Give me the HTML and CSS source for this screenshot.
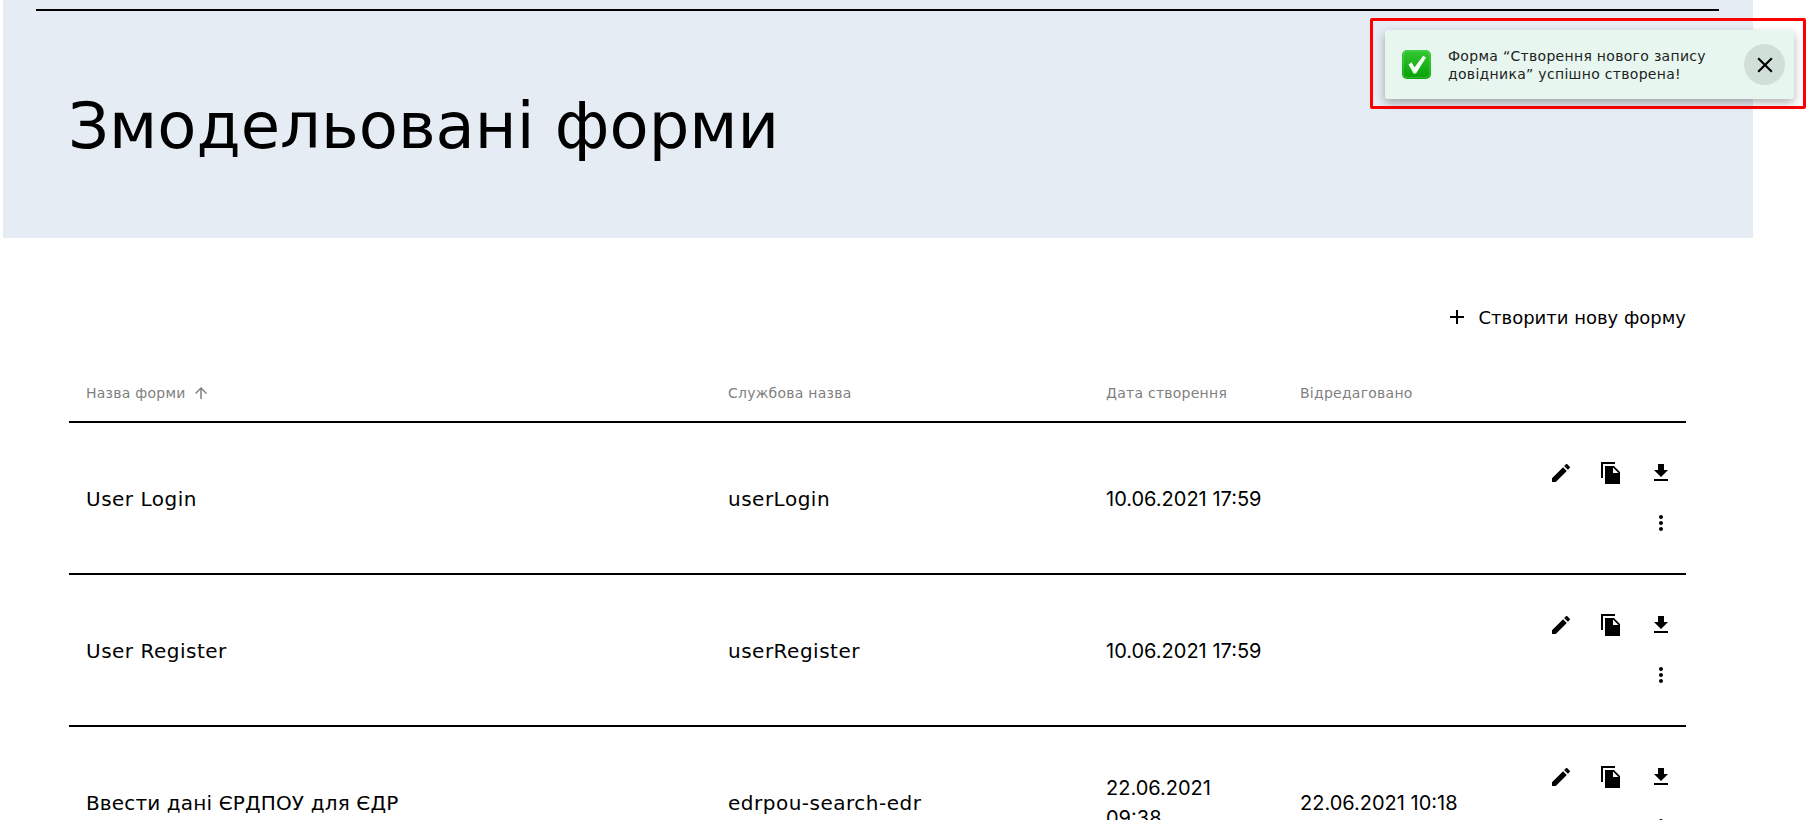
FILE: index.html
```html
<!DOCTYPE html>
<html lang="uk">
<head>
<meta charset="utf-8">
<title>Змодельовані форми</title>
<link rel="stylesheet" href="styles.css">
</head>
<body>
<div class="page">
  <header class="hero">
    <div class="hero-rule"></div>
    <h1 class="hero-title">Змодельовані форми</h1>
  </header>
  <main class="content">
    <div class="toolbar">
      <a class="create-link">
        <svg class="create-icon" viewBox="0 0 24 24"><path d="M19 13h-6v6h-2v-6H5v-2h6V5h2v6h6v2z"/></svg>
        <span>Створити нову форму</span>
      </a>
    </div>
    <table class="forms">
      <thead>
        <tr>
          <th class="col-name">Назва форми <svg class="sort-icon" viewBox="0 0 24 24"><path d="M4 12l1.41 1.41L11 7.83V20h2V7.83l5.58 5.59L20 12l-8-8-8 8z"/></svg></th>
          <th class="col-code">Службова назва</th>
          <th class="col-date">Дата створення</th>
          <th class="col-edit">Відредаговано</th>
          <th class="col-actions"></th>
        </tr>
      </thead>
      <tbody>
        <tr>
          <td>User Login</td><td>userLogin</td><td class="date">10.06.2021 17:59</td><td class="date"></td>
          <td class="actions"><div class="action-grid">
            <svg class="ico" viewBox="0 0 24 24"><path d="M3 17.25V21h3.75L17.81 9.94l-3.75-3.75L3 17.25zM20.71 7.04c.39-.39.39-1.02 0-1.41l-2.34-2.34c-.39-.39-1.02-.39-1.41 0l-1.83 1.83 3.75 3.75 1.83-1.83z"/></svg>
            <svg class="ico" viewBox="0 0 24 24"><path d="M16 1H2v16h2V3h12V1zm-1 4l6 6v12H6V5h9zm-1 7h5.5L14 6.5V12z"/></svg>
            <svg class="ico" viewBox="0 0 24 24"><path d="M19 9h-4V3H9v6H5l7 7 7-7zM5 18v2h14v-2H5z"/></svg>
            <svg class="ico" viewBox="0 0 24 24"><path d="M12 8c1.1 0 2-.9 2-2s-.9-2-2-2-2 .9-2 2 .9 2 2 2zm0 2c-1.1 0-2 .9-2 2s.9 2 2 2 2-.9 2-2-.9-2-2-2zm0 6c-1.1 0-2 .9-2 2s.9 2 2 2 2-.9 2-2-.9-2-2-2z"/></svg>
          </div></td>
        </tr>
        <tr>
          <td>User Register</td><td>userRegister</td><td class="date">10.06.2021 17:59</td><td class="date"></td>
          <td class="actions"><div class="action-grid">
            <svg class="ico" viewBox="0 0 24 24"><path d="M3 17.25V21h3.75L17.81 9.94l-3.75-3.75L3 17.25zM20.71 7.04c.39-.39.39-1.02 0-1.41l-2.34-2.34c-.39-.39-1.02-.39-1.41 0l-1.83 1.83 3.75 3.75 1.83-1.83z"/></svg>
            <svg class="ico" viewBox="0 0 24 24"><path d="M16 1H2v16h2V3h12V1zm-1 4l6 6v12H6V5h9zm-1 7h5.5L14 6.5V12z"/></svg>
            <svg class="ico" viewBox="0 0 24 24"><path d="M19 9h-4V3H9v6H5l7 7 7-7zM5 18v2h14v-2H5z"/></svg>
            <svg class="ico" viewBox="0 0 24 24"><path d="M12 8c1.1 0 2-.9 2-2s-.9-2-2-2-2 .9-2 2 .9 2 2 2zm0 2c-1.1 0-2 .9-2 2s.9 2 2 2 2-.9 2-2-.9-2-2-2zm0 6c-1.1 0-2 .9-2 2s.9 2 2 2 2-.9 2-2-.9-2-2-2z"/></svg>
          </div></td>
        </tr>
        <tr>
          <td class="name-cyr">Ввести дані ЄРДПОУ для ЄДР</td><td>edrpou-search-edr</td><td class="date">22.06.2021 09:38</td><td class="date">22.06.2021 10:18</td>
          <td class="actions"><div class="action-grid">
            <svg class="ico" viewBox="0 0 24 24"><path d="M3 17.25V21h3.75L17.81 9.94l-3.75-3.75L3 17.25zM20.71 7.04c.39-.39.39-1.02 0-1.41l-2.34-2.34c-.39-.39-1.02-.39-1.41 0l-1.83 1.83 3.75 3.75 1.83-1.83z"/></svg>
            <svg class="ico" viewBox="0 0 24 24"><path d="M16 1H2v16h2V3h12V1zm-1 4l6 6v12H6V5h9zm-1 7h5.5L14 6.5V12z"/></svg>
            <svg class="ico" viewBox="0 0 24 24"><path d="M19 9h-4V3H9v6H5l7 7 7-7zM5 18v2h14v-2H5z"/></svg>
            <svg class="ico" viewBox="0 0 24 24"><path d="M12 8c1.1 0 2-.9 2-2s-.9-2-2-2-2 .9-2 2 .9 2 2 2zm0 2c-1.1 0-2 .9-2 2s.9 2 2 2 2-.9 2-2-.9-2-2-2zm0 6c-1.1 0-2 .9-2 2s.9 2 2 2 2-.9 2-2-.9-2-2-2z"/></svg>
          </div></td>
        </tr>
      </tbody>
    </table>
  </main>
</div>
<div class="highlight">
  <div class="toast">
    <svg class="toast-check" viewBox="0 0 29 29">
      <defs>
        <linearGradient id="checkFill" x1="0" y1="0" x2="0" y2="1">
          <stop offset="0" stop-color="#35c935"/>
          <stop offset="1" stop-color="#059f05"/>
        </linearGradient>
      </defs>
      <rect width="29" height="29" rx="5" fill="url(#checkFill)"/>
      <rect x="1.2" y="1" width="26.6" height="26.6" rx="4" fill="none" stroke="#6fdf6f" stroke-opacity=".45"/>
      <path d="M6.5 14.5L9.6 12.2 12.6 17.3 21.2 5.8 24 7.6 14 23.6H11.6z" fill="#f4fff4"/>
    </svg>
    <p class="toast-text">Форма “Створення нового запису довідника” успішно створена!</p>
    <span class="toast-close"><svg class="close-ico" viewBox="0 0 24 24"><path d="M19 6.41L17.59 5 12 10.59 6.41 5 5 6.41 10.59 12 5 17.59 6.41 19 12 13.41 17.59 19 19 17.59 13.41 12z"/></svg></span>
  </div>
</div>
</body>
</html>
```
FILE: styles.css
```css
* { box-sizing: border-box; }
html, body { margin: 0; height: 820px; overflow: hidden; background: #fff; }
body { font-family: "DejaVu Sans", sans-serif; color: #000; position: relative; }
.page { width: 1753px; padding-left: 3px; }
.hero { height: 238px; background: #e5ecf3; padding: 9px 0 0 33px; }
.hero-rule { width: 1683px; height: 2px; background: #000; }
.hero-title { margin: 0; padding: 77px 0 0 32px; font-size: 64px; line-height: 76px; font-weight: 400; }
.content { padding: 0 67px 0 66px; }
.toolbar { display: flex; justify-content: flex-end; padding-top: 65px; height: 119px; }
.create-link { display: flex; align-items: center; height: 28px; font-size: 18px; gap: 9px; }
.create-icon { width: 24px; height: 24px; }
.forms { width: 1617px; border-collapse: collapse; table-layout: fixed; }
th { height: 65px; font-size: 14px; letter-spacing: .25px; font-weight: 400; color: #7f7f7f; text-align: left; padding: 7px 0 0 17px; border-bottom: 2px solid #000; }
td { height: 152px; font-size: 20px; letter-spacing: .5px; line-height: 30px; text-align: left; padding: 2px 16px 0 17px; border-bottom: 2px solid #000; }
td.date { font-family: Inter, sans-serif; letter-spacing: 0; }
td.name-cyr { letter-spacing: .15px; }
.col-name { width: 642px; }
.col-code { width: 378px; }
.col-date { width: 194px; }
.col-edit { width: 253px; }
.col-actions { width: 150px; }
.sort-icon { width: 18px; height: 18px; fill: #7f7f7f; vertical-align: -4px; margin-left: 2px; }
td.actions { padding: 0; }
.action-grid { display: flex; flex-wrap: wrap; justify-content: flex-end; }
.ico { width: 50px; height: 50px; padding: 13px; display: block; }
.highlight { position: absolute; left: 1370px; top: 18px; width: 436px; height: 91px; border: 3px solid #f00; border-radius: 2px; padding: 9px 9px 7px 12px; }
.toast { display: flex; align-items: center; height: 69px; background: #e7f7f0; border-radius: 3px; box-shadow: 0 4px 10px rgba(0,0,0,.3); padding: 0 9px 0 17px; }
.toast-check { width: 29px; height: 29px; flex: none; }
.toast-text { margin: 0 0 0 17px; width: 270px; font-size: 14px; letter-spacing: .3px; line-height: 18px; color: #222; }
.toast-close { width: 41px; height: 41px; border-radius: 50%; background: #d0e0d8; margin-left: auto; display: flex; align-items: center; justify-content: center; }
.close-ico { width: 26px; height: 26px; }
```
